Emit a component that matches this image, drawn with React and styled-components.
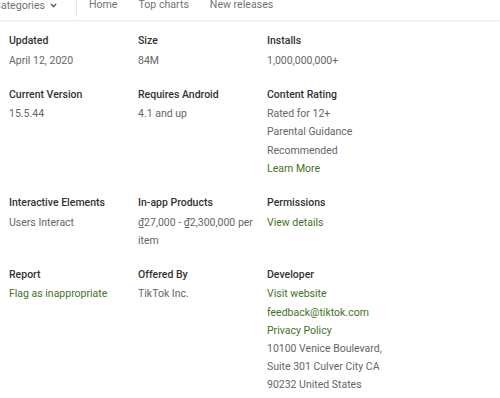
import React from 'react'
import styled, { createGlobalStyle } from 'styled-components'

const GlobalStyle = createGlobalStyle`
  html, body {
    margin: 0;
    padding: 0;
    background: #fff;
    overflow: hidden;
  }
  body {
    font-family: Roboto, "Noto Sans", Arial, sans-serif;
  }
`

const Page = styled.div`
  width: 500px;
  height: 398px;
  overflow: hidden;
  background: #fff;
`

const NavBar = styled.div`
  display: flex;
  align-items: center;
  height: 29px;
  margin-top: -9px;
  box-shadow: 0 1px 2px rgba(0, 0, 0, 0.1);
  color: #737373;
  font-size: 10.6px;
`

const CategoryMenu = styled.div`
  display: flex;
  align-items: center;
  gap: 4px;
  margin-left: -6px;
  padding-right: 18px;
  border-right: 1px solid #e3e3e3;
  height: 23px;
  margin-top: -1px;
`

const NavLink = styled.span`
  margin-left: ${p => p.$first ? '12px' : '21px'};
  margin-top: -3px;
`

const Grid = styled.div`
  display: grid;
  grid-template-columns: 129px 129px 129px;
  row-gap: 16px;
  padding: 12px 0 0 9px;
`

const Item = styled.div`
  display: flex;
  flex-direction: column;
`

const Label = styled.div`
  font-size: 10.5px;
  font-weight: 500;
  color: #333;
  line-height: 18px;
  margin-bottom: 1.5px;
`

const Value = styled.div`
  font-size: 10.5px;
  color: ${p => p.$link ? '#3f7327' : '#666'};
  line-height: 18.2px;
  padding-right: 4px;
`

const Chevron = () => (
  <svg width="9" height="9" viewBox="0 0 24 24">
    <path d="M5 8l7 7 7-7" fill="none" stroke="#616161" strokeWidth="4" />
  </svg>
)

const items = [
  { label: 'Updated', values: [{ text: 'April 12, 2020' }] },
  { label: 'Size', values: [{ text: '84M' }] },
  { label: 'Installs', values: [{ text: '1,000,000,000+' }] },
  { label: 'Current Version', values: [{ text: '15.5.44' }] },
  { label: 'Requires Android', values: [{ text: '4.1 and up' }] },
  {
    label: 'Content Rating',
    values: [
      { text: 'Rated for 12+' },
      { text: 'Parental Guidance' },
      { text: 'Recommended' },
      { text: 'Learn More', link: true },
    ],
  },
  { label: 'Interactive Elements', values: [{ text: 'Users Interact' }] },
  { label: 'In-app Products', values: [{ text: '₫27,000 - ₫2,300,000 per item' }] },
  { label: 'Permissions', values: [{ text: 'View details', link: true }] },
  { label: 'Report', values: [{ text: 'Flag as inappropriate', link: true }] },
  { label: 'Offered By', values: [{ text: 'TikTok Inc.' }] },
  {
    label: 'Developer',
    values: [
      { text: 'Visit website', link: true },
      { text: 'feedback@tiktok.com', link: true },
      { text: 'Privacy Policy', link: true },
      { text: '10100 Venice Boulevard, Suite 301 Culver City CA 90232 United States' },
    ],
  },
]

export default function App() {
  return (
    <Page>
      <GlobalStyle />
      <NavBar>
        <CategoryMenu>
          Categories <Chevron />
        </CategoryMenu>
        <NavLink $first>Home</NavLink>
        <NavLink>Top charts</NavLink>
        <NavLink>New releases</NavLink>
      </NavBar>
      <Grid>
        {items.map(item => (
          <Item key={item.label}>
            <Label>{item.label}</Label>
            {item.values.map(v => (
              <Value key={v.text} $link={v.link}>{v.text}</Value>
            ))}
          </Item>
        ))}
      </Grid>
    </Page>
  )
}
